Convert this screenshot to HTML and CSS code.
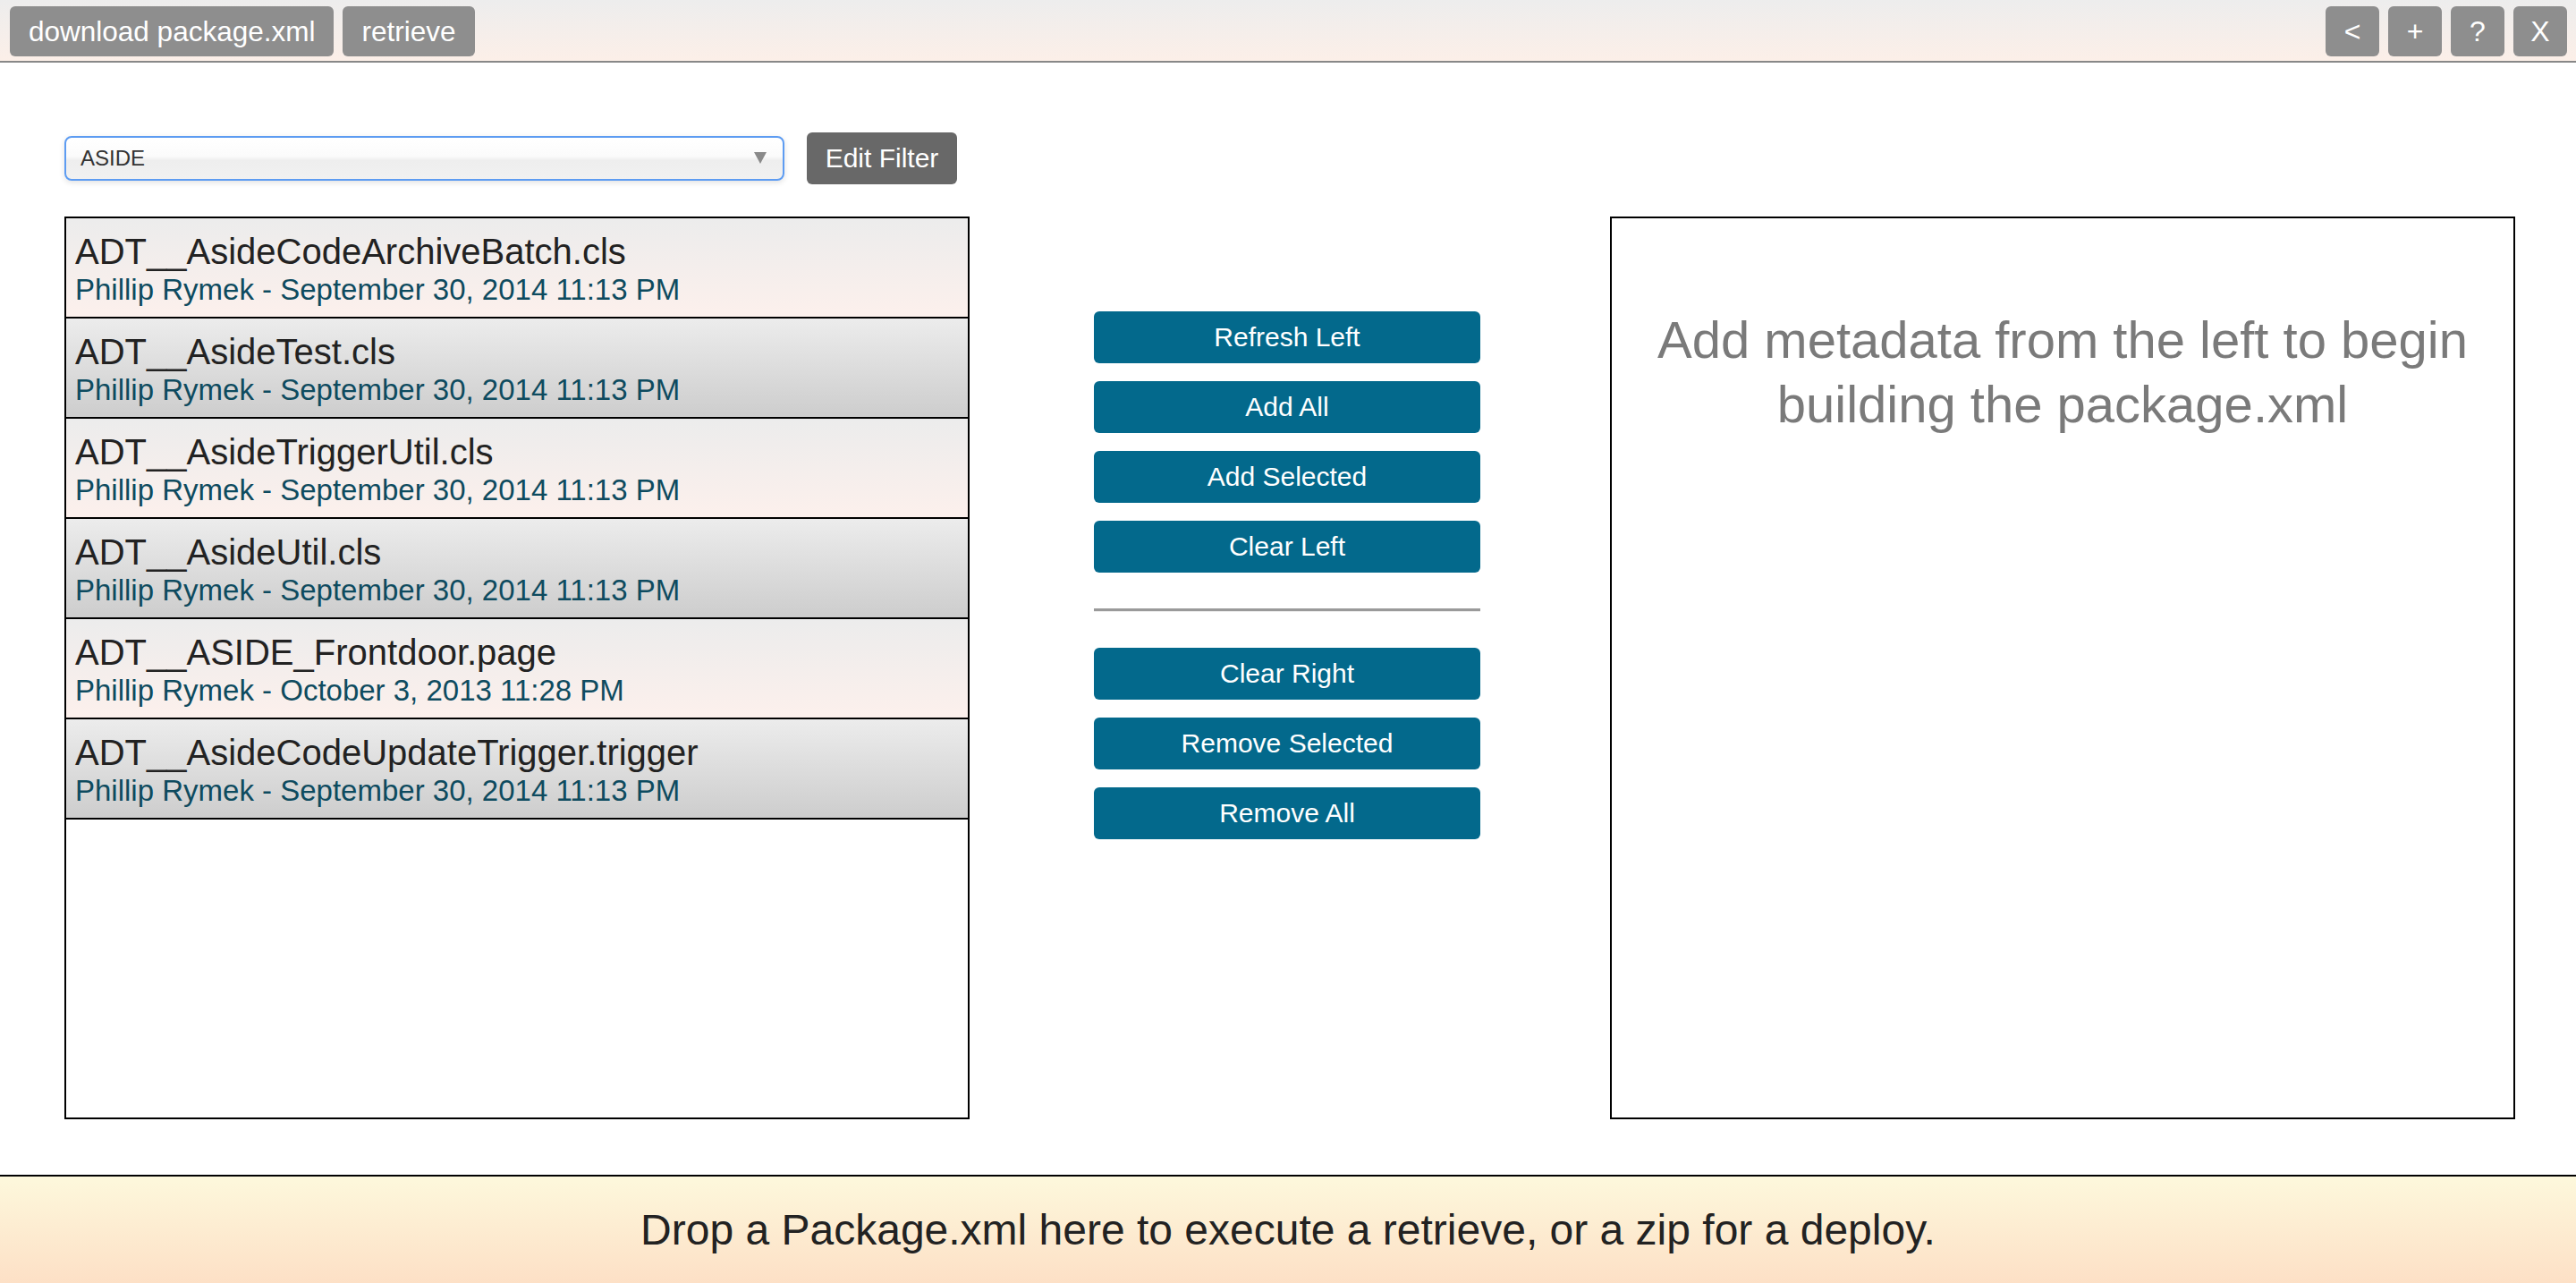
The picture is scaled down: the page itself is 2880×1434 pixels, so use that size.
FILE: index.html
```html
<!DOCTYPE html>
<html>
<head>
<meta charset="utf-8">
<title>Package Builder</title>
<link rel="stylesheet" href="styles.css">
</head>
<body>
<header class="topbar">
  <div class="topbar-group">
    <button class="top-btn">download package.xml</button>
    <button class="top-btn">retrieve</button>
  </div>
  <div class="topbar-group">
    <button class="top-btn square">&lt;</button>
    <button class="top-btn square">+</button>
    <button class="top-btn square">?</button>
    <button class="top-btn square">X</button>
  </div>
</header>

<main class="content">
  <div class="filter-row">
    <div class="select">
      <span class="select-value">ASIDE</span>
      <span class="select-arrow"></span>
    </div>
    <button class="edit-filter">Edit Filter</button>
  </div>

  <div class="columns">
    <div class="panel list">
      <div class="row odd">
        <div class="row-title">ADT__AsideCodeArchiveBatch.cls</div>
        <div class="row-sub">Phillip Rymek - September 30, 2014 11:13 PM</div>
      </div>
      <div class="row even">
        <div class="row-title">ADT__AsideTest.cls</div>
        <div class="row-sub">Phillip Rymek - September 30, 2014 11:13 PM</div>
      </div>
      <div class="row odd">
        <div class="row-title">ADT__AsideTriggerUtil.cls</div>
        <div class="row-sub">Phillip Rymek - September 30, 2014 11:13 PM</div>
      </div>
      <div class="row even">
        <div class="row-title">ADT__AsideUtil.cls</div>
        <div class="row-sub">Phillip Rymek - September 30, 2014 11:13 PM</div>
      </div>
      <div class="row odd">
        <div class="row-title">ADT__ASIDE_Frontdoor.page</div>
        <div class="row-sub">Phillip Rymek - October 3, 2013 11:28 PM</div>
      </div>
      <div class="row even">
        <div class="row-title">ADT__AsideCodeUpdateTrigger.trigger</div>
        <div class="row-sub">Phillip Rymek - September 30, 2014 11:13 PM</div>
      </div>
    </div>

    <div class="actions">
      <button class="action-btn">Refresh Left</button>
      <button class="action-btn">Add All</button>
      <button class="action-btn">Add Selected</button>
      <button class="action-btn">Clear Left</button>
      <hr class="divider">
      <button class="action-btn">Clear Right</button>
      <button class="action-btn">Remove Selected</button>
      <button class="action-btn">Remove All</button>
    </div>

    <div class="panel target">
      <p class="placeholder">Add metadata from the left to begin<br>building the package.xml</p>
    </div>
  </div>
</main>

<footer class="dropzone">Drop a Package.xml here to execute a retrieve, or a zip for a deploy.</footer>
</body>
</html>
```

FILE: styles.css
```css
* { box-sizing: border-box; }

html, body {
  margin: 0;
  padding: 0;
  height: 100%;
}

body {
  font-family: "Liberation Sans", Arial, Helvetica, sans-serif;
  color: #222;
  background: #fff;
  display: flex;
  flex-direction: column;
  min-height: 100vh;
}

button {
  font-family: inherit;
  border: none;
  cursor: pointer;
}

/* top bar */
.topbar {
  height: 70px;
  padding: 7px 10px 0 11px;
  display: flex;
  justify-content: space-between;
  align-items: flex-start;
  background: linear-gradient(#ededed, #fcefe8);
  border-bottom: 2px solid #888;
  flex: none;
}

.topbar-group {
  display: flex;
  gap: 10px;
}

.top-btn {
  height: 56px;
  padding: 0 21px;
  background: #8e8e8e;
  color: #fff;
  font-size: 31.5px;
  border-radius: 6px;
  line-height: 56px;
}

.top-btn.square {
  width: 60px;
  padding: 0;
  font-size: 32px;
}

/* content */
.content {
  flex: 1;
  padding: 78px 68px 0 72px;
}

.filter-row {
  display: flex;
  align-items: center;
  gap: 25px;
  height: 58px;
}

.select {
  width: 805px;
  height: 50px;
  border: 2px solid #5d9cf2;
  border-radius: 8px;
  background: linear-gradient(#ffffff 0%, #fbfbfb 45%, #eeeeee 55%, #f1f1f1 100%);
  box-shadow: 0 2px 6px rgba(0, 0, 0, 0.12);
  display: flex;
  align-items: center;
  justify-content: space-between;
  padding: 0 18px 0 16px;
}

.select-value {
  font-size: 24px;
  color: #333;
}

.select-arrow {
  width: 0;
  height: 0;
  border-left: 7px solid transparent;
  border-right: 7px solid transparent;
  border-top: 13px solid #8a8a8a;
  margin-top: -2px;
}

.edit-filter {
  width: 168px;
  height: 58px;
  background: #686868;
  color: #fff;
  font-size: 30px;
  border-radius: 6px;
  padding: 0;
}

.columns {
  margin-top: 36px;
  display: grid;
  grid-template-columns: 1012px 1fr 1012px;
}

.panel {
  height: 1009px;
  border: 2px solid #000;
  background: #fff;
}

.list {
  overflow: hidden;
}

.row {
  height: 112px;
  border-bottom: 2px solid #000;
  padding: 14px 10px 0 10px;
}

.row.odd {
  background: linear-gradient(#ececec, #fcf0ec);
}

.row.even {
  background: linear-gradient(#ececec, #cdcdcd);
}

.row-title {
  font-size: 40px;
  line-height: 46px;
  color: #222;
  white-space: nowrap;
}

.row-sub {
  font-size: 33px;
  line-height: 40px;
  color: #0e4b5f;
  white-space: nowrap;
}

/* actions column */
.actions {
  padding: 106px 145px 0 139px;
  display: flex;
  flex-direction: column;
  gap: 20px;
}

.action-btn {
  height: 58px;
  width: 100%;
  background: #03698c;
  color: #fff;
  font-size: 30px;
  border-radius: 6px;
  padding: 0;
}

.divider {
  margin: 20px 0 20px 0;
  height: 0;
  border: none;
  border-top: 3px solid #9a9a9a;
  border-bottom: 1px solid #ececec;
}

/* target panel */
.placeholder {
  margin: 0;
  padding-top: 100px;
  text-align: center;
  font-size: 58px;
  line-height: 72px;
  color: #7a7a7a;
}

/* footer */
.dropzone {
  flex: none;
  height: 121px;
  border-top: 2px solid #000;
  background: linear-gradient(#fdf8dc, #fde0c6);
  display: flex;
  align-items: center;
  justify-content: center;
  font-size: 48px;
  color: #222;
}
```
